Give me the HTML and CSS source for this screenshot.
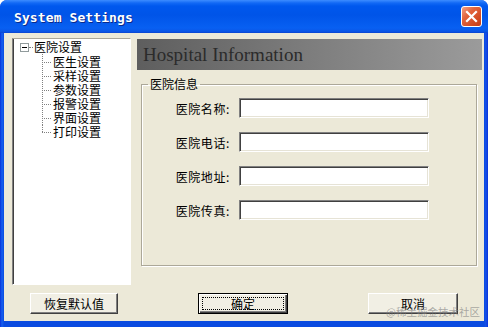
FILE: index.html
```html
<!DOCTYPE html>
<html>
<head>
<meta charset="utf-8">
<link rel="stylesheet" href="styles.css">
</head>
<body>
<div class="window">
  <div class="titlebar">
    <span class="title">System Settings</span>
    <span class="close">
      <svg width="13" height="13" viewBox="0 0 13 13"><path d="M2 2 L11 11 M11 2 L2 11" stroke="#fff" stroke-width="2.2" stroke-linecap="square"/></svg>
    </span>
  </div>
  <div class="client">
    <div class="main">
      <div class="tree">
        <div class="root"><span class="toggle"></span><span class="stub"></span><span class="node">医院设置</span></div>
        <ul class="children">
          <li>医生设置</li>
          <li>采样设置</li>
          <li>参数设置</li>
          <li>报警设置</li>
          <li>界面设置</li>
          <li>打印设置</li>
        </ul>
      </div>
      <div class="panel">
        <div class="banner">Hospital Information</div>
        <fieldset class="group">
          <legend>医院信息</legend>
          <div class="rows">
            <div class="row"><span class="label">医院名称:</span><span class="field"></span></div>
            <div class="row"><span class="label">医院电话:</span><span class="field"></span></div>
            <div class="row"><span class="label">医院地址:</span><span class="field"></span></div>
            <div class="row"><span class="label">医院传真:</span><span class="field"></span></div>
          </div>
        </fieldset>
      </div>
    </div>
    <div class="buttons">
      <span class="btn btn-reset">恢复默认值</span>
      <span class="btn btn-ok"><span class="focus">确定</span></span>
      <span class="btn btn-cancel">取消</span>
    </div>
    <div class="watermark">@稀土掘金技术社区</div>
  </div>
</div>
</body>
</html>
```
FILE: styles.css
```css
html, body {
  margin: 0;
  padding: 0;
  background: #fff;
}
body {
  font-family: "Noto Sans CJK SC", "Liberation Sans", sans-serif;
  font-size: 12px;
  color: #000;
}
.window {
  width: 488px;
  height: 327px;
  box-sizing: border-box;
  display: flex;
  flex-direction: column;
  background: linear-gradient(to right, #0831d9 0, #1660f0 2px, #0a4be0 4px, #0a4be0 484px, #1550e8 486px, #0831d9 488px);
  border-radius: 7px 7px 0 0;
}
.titlebar {
  height: 33px;
  flex: none;
  display: flex;
  align-items: center;
  padding: 0 5px 0 14px;
  border-radius: 7px 7px 0 0;
  background: linear-gradient(to bottom, #3d8cff 0, #1269f5 3px, #0058ee 6px, #0054e8 45%, #0860f2 85%, #0a56e6 95%, #0a44d0 100%);
}
.title {
  flex: 1;
  font-family: "DejaVu Sans Mono", "Liberation Mono", monospace;
  font-weight: bold;
  font-size: 13px;
  color: #fff;
  letter-spacing: 0.1px;
  text-shadow: 1px 1px 0 #0a2a8a;
  padding-top: 2px;
}
.close {
  width: 19px;
  height: 19px;
  margin-right: 1px;
  border: 1px solid #fff;
  border-radius: 3px;
  display: flex;
  align-items: center;
  justify-content: center;
  background: linear-gradient(135deg, #f2a085 0, #e2653e 35%, #d24a22 75%, #c23e1a 100%);
}
.client {
  flex: 1;
  position: relative;
  margin: 0 4px 6px 4px;
  background: #ece9d8;
  padding: 5px 2px 0 8px;
  display: flex;
  flex-direction: column;
}
.main {
  display: flex;
  gap: 6px;
  height: 247px;
}
.tree {
  width: 119px;
  flex: none;
  box-sizing: border-box;
  background: #fff;
  border: 1px solid;
  border-color: #a9a69a #fff #fff #808080;
  box-shadow: inset 1px 0 0 #404040;
  padding: 1px 0 0 7px;
}
.root {
  height: 14px;
  display: flex;
  align-items: center;
}
.toggle {
  width: 7px;
  height: 7px;
  border: 1px solid #919b9c;
  position: relative;
  background: #fff;
}
.toggle::after {
  content: "";
  position: absolute;
  left: 1px;
  top: 3px;
  width: 5px;
  height: 1px;
  background: #000;
}
.stub {
  width: 4px;
  border-top: 1px dotted #808080;
  margin-right: 1px;
}
.node {
  line-height: 14px;
}
.children {
  list-style: none;
  margin: 1px 0 0 0;
  padding: 0 0 0 33px;
}
.children li {
  position: relative;
  height: 14px;
  line-height: 14px;
}
.children li::before {
  content: "";
  position: absolute;
  left: -11px;
  top: 7px;
  width: 9px;
  border-top: 1px dotted #808080;
}
.children li::after {
  content: "";
  position: absolute;
  left: -11px;
  top: -1px;
  height: 15px;
  border-left: 1px dotted #808080;
}
.children li:last-child::after {
  height: 8px;
}
.panel {
  flex: 1;
  display: flex;
  flex-direction: column;
}
.banner {
  margin-top: 1px;
  height: 31px;
  line-height: 31px;
  padding-left: 6px;
  background: linear-gradient(to right, #5e5e5e 0, #7a7a7a 45%, #9b9b9b 100%);
  font-family: "Liberation Serif", serif;
  font-size: 19px;
  color: #2b2b2b;
}
.group {
  margin: 7px 5px 0 4px;
  height: 189px;
  box-sizing: border-box;
  border: 1px solid #aca899;
  box-shadow: inset 1px 1px 0 #fff, 1px 1px 0 #fff;
  padding: 0 6px;
  min-width: 0;
}
.group legend {
  padding: 0 2px;
  line-height: 14px;
  font-size: 12px;
}
.rows {
  margin-top: 7px;
  display: flex;
  flex-direction: column;
  gap: 14px;
}
.row {
  display: flex;
  align-items: center;
  height: 20px;
}
.label {
  width: 82px;
  text-align: right;
  margin-right: 9px;
  letter-spacing: 0.6px;
}
.field {
  width: 190px;
  height: 20px;
  box-sizing: border-box;
  background: #fff;
  border: 1px solid;
  border-color: #808080 #fff #fff #808080;
  box-shadow: inset 1px 1px 0 #404040, inset -1px -1px 0 #e6e3d6;
}
.buttons {
  display: flex;
  gap: 80px;
  padding: 8px 0 0 18px;
}
.btn {
  height: 21px;
  box-sizing: border-box;
  display: flex;
  align-items: center;
  justify-content: center;
  background: #f1efe4;
  border: 1px solid;
  border-color: #fff #404040 #404040 #fff;
  box-shadow: inset -1px -1px 0 #808080;
  font-size: 12px;
}
.btn-reset {
  width: 88px;
}
.btn-ok {
  width: 90px;
  border: 1px solid #000;
  box-shadow: inset 1px 1px 0 #fff, inset -1px -1px 0 #404040, inset -2px -2px 0 #808080;
  padding: 3px;
}
.focus {
  flex: 1;
  align-self: stretch;
  display: flex;
  align-items: center;
  justify-content: center;
  border: 1px dotted #000;
}
.btn-cancel {
  width: 90px;
}
.watermark {
  position: absolute;
  right: 4px;
  bottom: 3px;
  font-size: 10.5px;
  line-height: 12px;
  color: rgba(130, 130, 130, 0.65);
}
```
